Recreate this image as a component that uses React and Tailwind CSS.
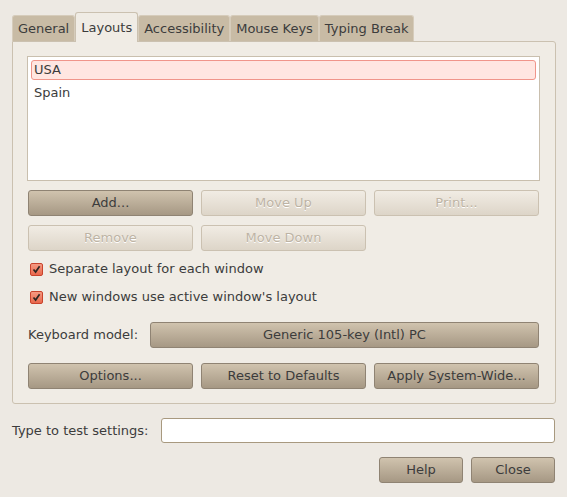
const font = { fontFamily: '"DejaVu Sans", "Liberation Sans", sans-serif' };

function Btn({ children, disabled, className = '' }) {
  const look = disabled
    ? 'border-[#cbc1b1] bg-gradient-to-b from-[#f1ece4] to-[#ddd5c8] text-[#bdb3a4] [text-shadow:0_1px_0_#fff]'
    : 'border-[#8f8373] bg-gradient-to-b from-[#d0c3ae] to-[#a69884] text-[#3c3c3c]';
  return (
    <button
      className={`h-[26px] rounded-[3px] border text-[13px] flex items-center justify-center ${look} ${className}`}
    >
      {children}
    </button>
  );
}

function Check({ label }) {
  return (
    <label className="flex items-center gap-[6px] h-[20px]">
      <span className="w-[13px] h-[13px] ml-[3px] rounded-[2px] border border-[#c9432c] bg-gradient-to-b from-[#f59a82] to-[#e8674c] flex items-center justify-center">
        <svg width="9" height="9" viewBox="0 0 9 9">
          <path d="M1.5 4.5 L3.6 7 L7.6 1.2" fill="none" stroke="#2d2622" strokeWidth="1.7" />
        </svg>
      </span>
      <span className="text-[13px] text-[#3c3c3c]">{label}</span>
    </label>
  );
}

const tabs = ['General', 'Layouts', 'Accessibility', 'Mouse Keys', 'Typing Break'];

export default function App() {
  return (
    <div style={font} className="w-[567px] h-[497px] bg-[#ede9e3] text-[#3c3c3c] px-[12px] pt-[12px] overflow-hidden">
      {/* tab strip */}
      <div className="flex items-end h-[29px]">
        {tabs.map((t) =>
          t === 'Layouts' ? (
            <div
              key={t}
              className="h-[30px] -mb-px px-[5px] flex items-center rounded-t-[3px] border border-b-0 border-[#cbc1b0] bg-[#f0ece5] text-[13px] relative z-10"
            >
              {t}
            </div>
          ) : (
            <div
              key={t}
              className="h-[26px] px-[5px] flex items-center rounded-t-[3px] border border-b-0 border-[#d6ccbb] bg-[#c8bba5] text-[13px]"
            >
              {t}
            </div>
          )
        )}
      </div>

      {/* notebook page */}
      <div className="w-[544px] border border-[#cbc1b0] rounded-b-[3px] rounded-tr-[3px] bg-[#f0ece5] px-[14px] pt-[14px] pb-[14px]">
        <div className="h-[125px] mr-px border border-[#c9bfae] bg-white p-[3px]">
          <div className="h-[20px] rounded-[3px] border border-[#f0958a] bg-[#ffe6e1] px-[2px] flex items-center text-[13px]">
            USA
          </div>
          <div className="h-[26px] px-[3px] flex items-center text-[13px]">Spain</div>
        </div>

        <div className="grid grid-cols-3 gap-x-[8px] gap-y-[9px] mt-[9px] pl-px pr-[2px]">
          <Btn>Add...</Btn>
          <Btn disabled>Move Up</Btn>
          <Btn disabled>Print...</Btn>
          <Btn disabled>Remove</Btn>
          <Btn disabled>Move Down</Btn>
        </div>

        <div className="mt-[8px] flex flex-col gap-[8px]">
          <Check label="Separate layout for each window" />
          <Check label="New windows use active window's layout" />
        </div>

        <div className="flex items-center mt-[15px] pl-px pr-[2px]">
          <span className="w-[122px] text-[13px]">Keyboard model:</span>
          <Btn className="flex-1">Generic 105-key (Intl) PC</Btn>
        </div>

        <div className="grid grid-cols-3 gap-x-[8px] mt-[15px] pl-px pr-[2px]">
          <Btn>Options...</Btn>
          <Btn>Reset to Defaults</Btn>
          <Btn>Apply System-Wide...</Btn>
        </div>
      </div>

      <div className="flex items-center mt-[14px] w-[543px]">
        <span className="w-[149px] text-[13px]">Type to test settings:</span>
        <div className="flex-1 h-[25px] rounded-[3px] border border-[#a8997f] bg-white" />
      </div>

      <div className="flex justify-end gap-[8px] mt-[14px] w-[543px]">
        <Btn className="w-[84px]">Help</Btn>
        <Btn className="w-[84px]">Close</Btn>
      </div>
    </div>
  );
}
